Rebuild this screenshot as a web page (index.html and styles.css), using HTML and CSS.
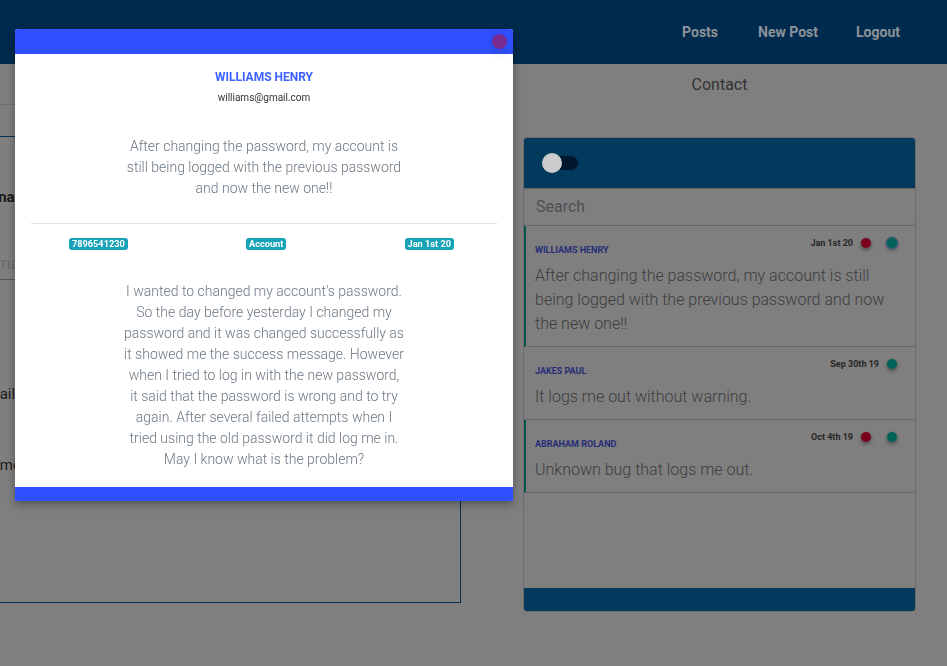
FILE: index.html
```html
<!DOCTYPE html>
<html lang="en">
<head>
<meta charset="utf-8">
<title>Support tickets</title>
<link rel="stylesheet" href="styles.css">
</head>
<body>
<nav class="navbar">
  <ul class="nav-links">
    <li class="nav-link">Posts</li>
    <li class="nav-link">New Post</li>
    <li class="nav-link">Logout</li>
  </ul>
</nav>

<main class="page">
  <section class="left-col">
    <h2 class="col-title col-title-lined">New Post</h2>
    <form class="form-card">
      <div class="field field-first">
        <label class="field-label field-label-bold">Username</label>
        <div class="field-input">Username</div>
      </div>
      <div class="field field-email">
        <label class="field-label">Email</label>
      </div>
      <div class="field field-name">
        <label class="field-label">Name</label>
      </div>
    </form>
  </section>

  <section class="right-col">
    <h2 class="col-title">Contact</h2>
    <div class="contact-card">
      <div class="card-head">
        <span class="switch">
          <span class="switch-track"></span>
          <span class="switch-knob"></span>
        </span>
      </div>
      <div class="search">Search</div>
      <ul class="ticket-list">
        <li class="ticket ticket-marked">
          <div class="ticket-top">
            <span class="ticket-name">WILLIAMS HENRY</span>
            <span class="ticket-meta">
              <span class="ticket-date">Jan 1st 20</span>
              <span class="dot dot-red"></span>
              <span class="dot dot-teal dot-focus"></span>
            </span>
          </div>
          <p class="ticket-msg">After changing the password, my account is still being logged with the previous password and now the new one!!</p>
        </li>
        <li class="ticket">
          <div class="ticket-top">
            <span class="ticket-name">JAKES PAUL</span>
            <span class="ticket-meta">
              <span class="ticket-date">Sep 30th 19</span>
              <span class="dot dot-teal"></span>
            </span>
          </div>
          <p class="ticket-msg">It logs me out without warning.</p>
        </li>
        <li class="ticket ticket-marked">
          <div class="ticket-top">
            <span class="ticket-name">ABRAHAM ROLAND</span>
            <span class="ticket-meta">
              <span class="ticket-date">Oct 4th 19</span>
              <span class="dot dot-red"></span>
              <span class="dot dot-teal"></span>
            </span>
          </div>
          <p class="ticket-msg">Unknown bug that logs me out.</p>
        </li>
      </ul>
      <div class="card-foot"></div>
    </div>
  </section>
</main>

<div class="backdrop"></div>

<div class="modal">
  <div class="modal-head"><span class="modal-close"></span></div>
  <div class="modal-body">
    <h3 class="modal-name">WILLIAMS HENRY</h3>
    <p class="modal-email">williams@gmail.com</p>
    <p class="modal-title">After changing the password, my account is still being logged with the previous password and now the new one!!</p>
    <hr class="modal-rule">
    <div class="badges">
      <span class="badge">7896541230</span>
      <span class="badge">Account</span>
      <span class="badge">Jan 1st 20</span>
    </div>
    <p class="modal-desc">I wanted to changed my account's password. So the day before yesterday I changed my password and it was changed successfully as it showed me the success message. However when I tried to log in with the new password, it said that the password is wrong and to try again. After several failed attempts when I tried using the old password it did log me in. May I know what is the problem?</p>
  </div>
  <div class="modal-foot"></div>
</div>
</body>
</html>
```

FILE: styles.css
```css
* { box-sizing: border-box; }

html, body {
  margin: 0;
  padding: 0;
  height: 100%;
  overflow: hidden;
}

body {
  background: #ffffff;
  font-family: Roboto, "Noto Sans", sans-serif;
  color: #333;
}

/* ---------- navbar (sits above the backdrop) ---------- */
.navbar {
  position: relative;
  z-index: 1045;
  height: 64px;
  background: #002b4e;
  display: flex;
  justify-content: flex-end;
  align-items: center;
  padding-right: 28px;
}

.nav-links {
  list-style: none;
  margin: 0;
  padding: 0;
  display: flex;
}

.nav-link {
  padding: 0 19px;
  font-size: 14px;
  font-weight: 700;
  color: #8c9299;
  line-height: 20px;
}

.nav-link:first-child { padding-right: 21px; }

/* ---------- page ---------- */
.page {
  display: flex;
  gap: 62px;
  margin-left: -20px;
}

.left-col { width: 481px; }
.right-col { width: 393px; }

.col-title {
  margin: 0;
  padding: 11px 0 9px;
  font-size: 16px;
  line-height: 20px;
  font-weight: 400;
  text-align: center;
  color: #676767;
}

.col-title-lined { border-bottom: 1px solid #dcdcdc; }

/* left form */
.form-card {
  margin: 31px 0 0;
  height: 467px;
  border: 1px solid #0a64b0;
  padding: 50px 20px 0 0;
}

.field-first { margin-left: -14px; }

.field-label {
  display: block;
  font-size: 15px;
  line-height: 20px;
  color: #3a3a3a;
}

.field-label-bold {
  font-weight: 700;
  color: #303030;
}

.field-input {
  margin-top: 40px;
  padding: 6px 0 5px;
  font-size: 17px;
  line-height: 21px;
  font-weight: 300;
  color: #c4ccd4;
  border-bottom: 1px solid #a8a8a8;
}

.field-email { margin-top: 104px; margin-left: -3px; }
.field-name { margin-top: 51px; }

/* right card */
.contact-card {
  margin-top: 33px;
  border: 1px solid #d6d6d6;
  border-radius: 4px;
  overflow: hidden;
}

.card-head {
  height: 51px;
  background: #0274ba;
  display: flex;
  align-items: center;
  padding-left: 19px;
  margin: -1px -1px 0;
}

.switch {
  position: relative;
  width: 37px;
  height: 20px;
  display: block;
}

.switch-track {
  position: absolute;
  left: 5px;
  top: 3px;
  width: 31px;
  height: 14px;
  border-radius: 7px;
  background: #022f5a;
}

.switch-knob {
  position: absolute;
  left: 0;
  top: 0;
  width: 20px;
  height: 20px;
  border-radius: 50%;
  background: #cdcdcd;
  z-index: 1045;
}

.search {
  height: 38px;
  border: 1px solid #cbcbcb;
  border-radius: 3px;
  padding: 0 12px;
  font-size: 16px;
  line-height: 36px;
  color: #98a2ae;
  margin: 0 -1px;
}

.ticket-list {
  list-style: none;
  margin: 0;
  padding: 0;
  height: 362px;
}

.ticket {
  border-left: 3px solid transparent;
  border-bottom: 1px solid #cccccc;
  padding: 10px 18px 10px 9px;
  margin-left: -1px;
}

.ticket-marked { border-left-color: #00ae9c; }

.ticket-top {
  display: flex;
  justify-content: space-between;
  align-items: flex-start;
}

.ticket-name {
  margin-top: 9px;
  font-size: 9px;
  line-height: 11px;
  font-weight: 700;
  color: #4c5af0;
}

.ticket-meta {
  display: flex;
  align-items: center;
  height: 14px;
}

.ticket-date {
  font-size: 9px;
  font-weight: 700;
  color: #4e4e4e;
}

.dot {
  width: 10px;
  height: 10px;
  border-radius: 50%;
  margin-left: 16px;
  box-shadow: 0 2px 4px rgba(0, 0, 0, 0.45);
}

.ticket-date + .dot { margin-left: 8px; }

.dot-red { background: #f4003a; }
.dot-teal { background: #00c6b2; }
.dot-focus { box-shadow: 0 0 0 1.5px #7ab0f0, 0 2px 4px rgba(0, 0, 0, 0.45); }

.ticket-msg {
  margin: 8px 0 0;
  font-size: 16px;
  line-height: 24px;
  font-weight: 300;
  color: #7c7c7c;
}

.card-foot {
  height: 24px;
  background: #0274ba;
  margin: 0 -1px -1px;
}

/* ---------- backdrop + modal ---------- */
.backdrop {
  position: fixed;
  inset: 0;
  background: rgba(0, 0, 0, 0.5);
  z-index: 1040;
}

.modal {
  position: fixed;
  left: 15px;
  top: 29px;
  width: 498px;
  height: 472px;
  z-index: 1050;
  background: #fff;
  border-radius: 3px 3px 0 0;
  display: flex;
  flex-direction: column;
  box-shadow: 0 3px 8px rgba(0, 0, 0, 0.35);
}

.modal-head {
  position: relative;
  height: 25px;
  background: #3050ff;
  border-radius: 3px 3px 0 0;
}

.modal-close {
  position: absolute;
  right: 6px;
  top: 5px;
  width: 15px;
  height: 15px;
  border-radius: 50%;
  background: #7a2b90;
  box-shadow: 0 3px 12px rgba(0, 0, 0, 0.12);
}

.modal-body {
  flex: 1;
  padding: 16px 16px 0;
  text-align: center;
}

.modal-name {
  margin: 0;
  font-size: 12px;
  line-height: 14px;
  font-weight: 700;
  color: #3d62ff;
}

.modal-email {
  margin: 8px 0 0;
  font-size: 10px;
  line-height: 12px;
  color: #333;
}

.modal-title {
  margin: 32px auto 0;
  width: 284px;
  font-size: 14px;
  line-height: 21px;
  font-weight: 300;
  color: #6c7884;
}

.modal-rule {
  margin: 24px 0 0;
  border: 0;
  border-top: 1px solid #e2e2e2;
}

.badges {
  display: flex;
  justify-content: space-between;
  padding: 0 43px 0 38px;
  margin-top: 14px;
}

.badge {
  background: #17a2b8;
  color: #fff;
  font-size: 9.2px;
  font-weight: 700;
  line-height: 12px;
  padding: 0 3px;
  border-radius: 3px;
}

.modal-desc {
  margin: 31px auto 0;
  width: 281px;
  font-size: 14px;
  line-height: 21px;
  font-weight: 300;
  color: #6c7884;
}

.modal-foot {
  height: 14px;
  background: #3050ff;
}
```
